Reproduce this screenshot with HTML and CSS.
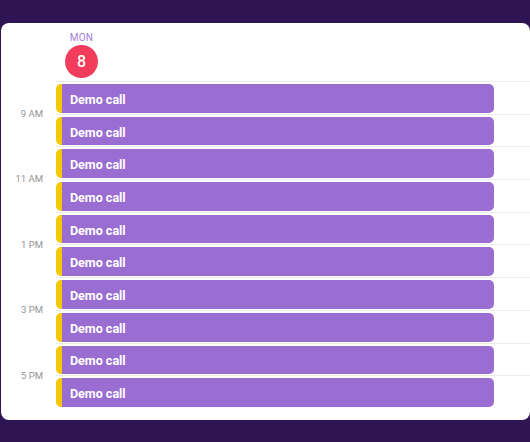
FILE: index.html
```html
<!DOCTYPE html>
<html lang="en">
<head>
    <meta charset="UTF-8">
    <meta name="viewport" content="width=device-width, initial-scale=1.0">
    <title>Calendar</title>
    <link rel="stylesheet" href="styles.css">
</head>
<body>
    <div class="card">
        <div class="day-header">
            <div class="day">
                <div class="day-name">MON</div>
                <div class="day-number">8</div>
            </div>
        </div>
        <div class="schedule">
            <div class="times">
                <div class="time">9 AM</div>
                <div class="time">11 AM</div>
                <div class="time">1 PM</div>
                <div class="time">3 PM</div>
                <div class="time">5 PM</div>
            </div>
            <div class="slots">
                <div class="slot"><div class="event">Demo call</div></div>
                <div class="slot"><div class="event">Demo call</div></div>
                <div class="slot"><div class="event">Demo call</div></div>
                <div class="slot"><div class="event">Demo call</div></div>
                <div class="slot"><div class="event">Demo call</div></div>
                <div class="slot"><div class="event">Demo call</div></div>
                <div class="slot"><div class="event">Demo call</div></div>
                <div class="slot"><div class="event">Demo call</div></div>
                <div class="slot"><div class="event">Demo call</div></div>
                <div class="slot"><div class="event">Demo call</div></div>
            </div>
        </div>
    </div>
</body>
</html>
```

FILE: styles.css
```css
body {
    margin: 0;
    background-color: #2e1452;
    font-family: Roboto, "Liberation Sans", sans-serif;
    height: 442px;
    overflow: hidden;
}

.card {
    margin: 23px 0 0 1px;
    width: 529px;
    height: 397px;
    background: #fff;
    border-radius: 8px;
    overflow: hidden;
}

.day-header {
    height: 58px;
    padding-left: 64px;
    box-sizing: border-box;
}

.day {
    width: 33px;
    padding-top: 9px;
    display: flex;
    flex-direction: column;
    align-items: center;
}

.day-name {
    font-size: 10px;
    line-height: 12px;
    color: #a47ddb;
    letter-spacing: 0.2px;
}

.day-number {
    margin-top: 1px;
    width: 33px;
    height: 33px;
    border-radius: 50%;
    background: #f23c5c;
    color: #fff;
    font-size: 16px;
    font-weight: 500;
    display: flex;
    justify-content: center;
    align-items: center;
}

.schedule {
    display: flex;
}

.times {
    width: 54px;
    padding-top: 27px;
    padding-right: 12px;
    box-sizing: border-box;
    text-align: right;
}

.time {
    height: 65.4px;
    line-height: 12px;
    font-size: 9.5px;
    color: #939393;
}

.slots {
    flex: 1;
}

.slot {
    height: 32.7px;
    border-top: 1px solid #ececec;
    box-sizing: border-box;
    padding: 2px 36px 1px 1px;
}

.event {
    height: 100%;
    background: #9a6dd3;
    border-left: 6px solid #f4c804;
    border-radius: 5px;
    box-sizing: border-box;
    padding: 2px 0 0 8px;
    display: flex;
    align-items: center;
    color: #fff;
    font-size: 12.5px;
    font-weight: bold;
}
```
